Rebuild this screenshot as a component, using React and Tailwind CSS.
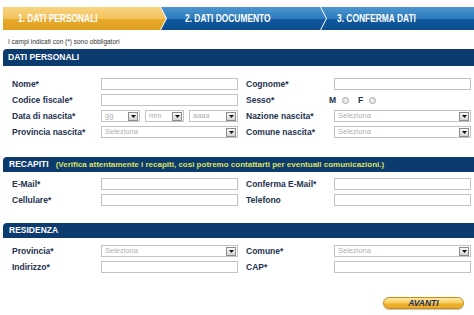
import React from 'react';

const labelCls = "text-[8.5px] font-bold text-[#24324f] leading-none whitespace-nowrap";

function SelectArrow() {
  return (
    <div className="flex items-center justify-center w-[10px] h-[9px] border border-[#8c8c8c] bg-[linear-gradient(#fafafa,#d4d4d4)] mr-[1px]">
      <svg width="5" height="3" viewBox="0 0 5 3">
        <polygon points="0,0 5,0 2.5,3" fill="#111" />
      </svg>
    </div>
  );
}

function Select({ placeholder = 'Seleziona', className = 'w-[137px]' }) {
  return (
    <div className={`flex items-center justify-between h-[12px] border border-[#c2c2c2] bg-white ${className}`}>
      <span className="pl-[3px] text-[7.5px] text-[#b0b0b0] leading-none">{placeholder}</span>
      <SelectArrow />
    </div>
  );
}

function Input() {
  return <div className="w-[137px] h-[12px] border border-[#c2c2c2] bg-white" />;
}

function Radio() {
  return <span className="inline-block w-[7px] h-[7px] rounded-full border border-[#a8a8a8] bg-[#ececec]" />;
}

function Row({ left, leftLabel, right, rightLabel }) {
  return (
    <div className="flex items-center h-[12px] pl-[12px]">
      <span className={`${labelCls} w-[89px]`}>{leftLabel}</span>
      {left}
      <span className={`${labelCls} w-[88px] ml-[8px]`}>{rightLabel}</span>
      {right}
    </div>
  );
}

function SectionHeader({ title, note, tall }) {
  return (
    <div className={`flex items-center ml-[3px] bg-[#0c3b6f] rounded-tl-[4px] ${tall ? 'h-[17px] pl-[5px]' : 'h-[15px] pl-[6px]'}`}>
      <span className="text-[8.5px] font-bold text-white leading-none">{title}</span>
      {note && (
        <span className="ml-[7px] text-[8px] font-bold text-[#dfe05c] leading-none whitespace-nowrap">{note}</span>
      )}
    </div>
  );
}

const stepText = "inline-block origin-left scale-x-[0.84] text-[10px] font-bold text-white leading-none whitespace-nowrap";

export default function App() {
  return (
    <div className="w-[474px] h-[315px] overflow-hidden bg-white font-['Liberation_Sans',Arial,sans-serif]">
      {/* Steps */}
      <div className="flex mt-[7px] h-[23px] pl-[3px]">
        <div className="flex items-center w-[163px] pl-[15px] bg-[linear-gradient(#f8d47f_0%,#f3c35d_50%,#e7aa2b_53%,#e1a020_100%)] [clip-path:polygon(0_0,calc(100%_-_6px)_0,100%_50%,calc(100%_-_6px)_100%,0_100%)]">
          <span className={`${stepText} text-[#fff6e0]`}>1. DATI PERSONALI</span>
        </div>
        <div className="flex items-center w-[165px] -ml-[5px] pl-[24px] bg-[linear-gradient(#4c96d1_0%,#2e7bbc_50%,#1159a0_53%,#0b4c8e_100%)] [clip-path:polygon(0_0,calc(100%_-_6px)_0,100%_50%,calc(100%_-_6px)_100%,0_100%,6px_50%)]">
          <span className={stepText}>2. DATI DOCUMENTO</span>
        </div>
        <div className="flex items-center flex-1 -ml-[5px] pl-[16px] bg-[linear-gradient(#4c96d1_0%,#2e7bbc_50%,#1159a0_53%,#0b4c8e_100%)] [clip-path:polygon(0_0,100%_0,100%_100%,0_100%,6px_50%)]">
          <span className={stepText}>3. CONFERMA DATI</span>
        </div>
      </div>

      <p className="mt-[7px] h-[10px] pl-[8px] text-[6.5px] text-[#333] leading-[10px]">
        I campi indicati con (*) sono obbligatori
      </p>

      {/* Dati personali */}
      <div className="mt-[2px]">
        <SectionHeader title="DATI PERSONALI" tall />
      </div>
      <div className="flex flex-col gap-[4px] mt-[12px]">
        <Row leftLabel="Nome*" left={<Input />} rightLabel="Cognome*" right={<Input />} />
        <div className="flex items-center h-[12px] pl-[12px]">
          <span className={`${labelCls} w-[89px]`}>Codice fiscale*</span>
          <Input />
          <span className={`${labelCls} w-[83px] ml-[8px]`}>Sesso*</span>
          <span className={labelCls}>M</span>
          <span className="ml-[6px] flex"><Radio /></span>
          <span className={`${labelCls} ml-[9px]`}>F</span>
          <span className="ml-[6px] flex"><Radio /></span>
        </div>
        <Row
          leftLabel="Data di nascita*"
          left={
            <div className="flex w-[137px] gap-[5px]">
              <Select placeholder="gg" className="w-[39px]" />
              <Select placeholder="mm" className="w-[39px]" />
              <Select placeholder="aaaa" className="w-[49px]" />
            </div>
          }
          rightLabel="Nazione nascita*"
          right={<Select />}
        />
        <Row leftLabel="Provincia nascita*" left={<Select />} rightLabel="Comune nascita*" right={<Select />} />
      </div>

      {/* Recapiti */}
      <div className="mt-[19px]">
        <SectionHeader
          title="RECAPITI"
          note="(Verifica attentamente i recapiti, così potremo contattarti per eventuali comunicazioni.)"
        />
      </div>
      <div className="flex flex-col gap-[4px] mt-[6px]">
        <Row leftLabel="E-Mail*" left={<Input />} rightLabel="Conferma E-Mail*" right={<Input />} />
        <Row leftLabel="Cellulare*" left={<Input />} rightLabel="Telefono" right={<Input />} />
      </div>

      {/* Residenza */}
      <div className="mt-[17px]">
        <SectionHeader title="RESIDENZA" />
      </div>
      <div className="flex flex-col gap-[4px] mt-[7px]">
        <Row leftLabel="Provincia*" left={<Select />} rightLabel="Comune*" right={<Select />} />
        <Row leftLabel="Indirizzo*" left={<Input />} rightLabel="CAP*" right={<Input />} />
      </div>

      <div className="flex mt-[24px] pl-[383px]">
        <button className="flex items-center justify-center w-[81px] h-[12px] rounded-full border border-[#c98d14] bg-[linear-gradient(#fde9a6_0%,#f8cf62_45%,#eeb22e_60%,#e9a624_100%)] shadow-[0_1px_1px_rgba(0,0,0,0.25)]">
          <span className="text-[8.5px] font-bold italic text-[#1d2f5c] leading-none">AVANTI</span>
        </button>
      </div>
    </div>
  );
}
